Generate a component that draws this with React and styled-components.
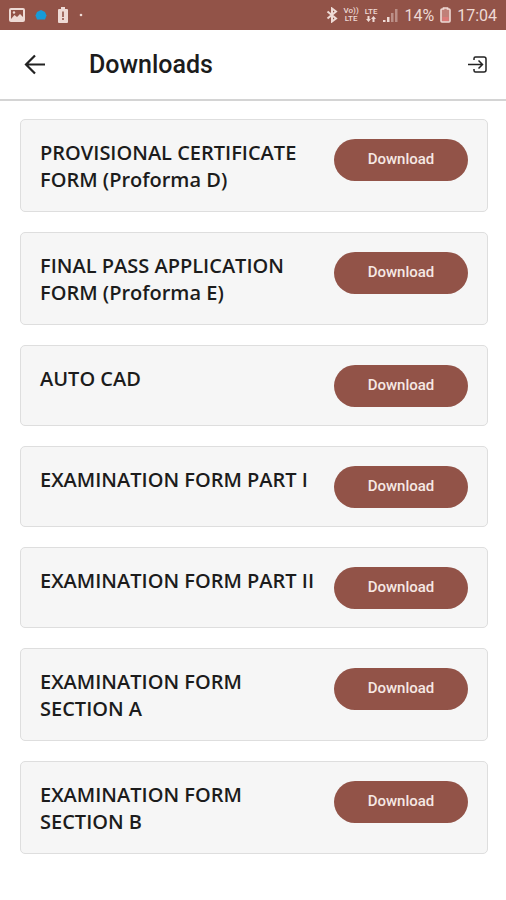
import React from 'react';

import styled, { createGlobalStyle } from 'styled-components';

const GlobalStyle = createGlobalStyle`
  * {
    box-sizing: border-box;
  }
  body {
    margin: 0;
    background: #fff;
    color: #1c1c1c;
    font-family: 'Open Sans', sans-serif;
  }
`;

const StatusBar = styled.div`
  display: flex;
  align-items: center;
  justify-content: space-between;
  height: 30px;
  padding: 0 9px;
  background: #925348;
  color: #eedad5;
`;

const StatusGroup = styled.div`
  display: flex;
  align-items: center;
  gap: ${({ $gap }) => $gap}px;
`;

const Network = styled.span`
  display: flex;
  flex-direction: column;
  align-items: center;
  font: 500 8px/8px Roboto, sans-serif;
`;

const StatusText = styled.span`
  padding-top: 2px;
  font: 400 16px/20px Roboto, sans-serif;
`;

const Header = styled.header`
  display: flex;
  align-items: center;
  height: 71px;
  padding: 0 16px 0 20px;
  border-bottom: 2px solid #d4d4d4;
`;

const IconButton = styled.button`
  display: flex;
  padding: 2px;
  border: 0;
  background: none;
  color: #222;
  cursor: pointer;
`;

const Title = styled.h1`
  flex: 1;
  margin: 0 0 0 39px;
  font: 500 25px/32px Roboto, sans-serif;
`;

const List = styled.ul`
  display: flex;
  flex-direction: column;
  gap: 20px;
  margin: 0;
  padding: 18px 18px 20px 20px;
  list-style: none;
`;

const Card = styled.li`
  display: flex;
  align-items: flex-start;
  justify-content: space-between;
  gap: 16px;
  padding: 19px 19px 18px;
  border: 1px solid #dedede;
  border-radius: 5px;
  background: #f6f6f6;
`;

const Name = styled.h2`
  margin: 0;
  font-size: 20px;
  font-weight: 600;
  line-height: 27px;
`;

const DownloadButton = styled.button`
  flex: none;
  width: 134px;
  height: 42px;
  padding: 0 0 2px;
  border: 0;
  border-radius: 21px;
  background: #925348;
  color: #f6e8e4;
  font: 500 15px/20px Roboto, sans-serif;
  cursor: pointer;
`;

const forms = [
  'PROVISIONAL CERTIFICATE FORM (Proforma D)',
  'FINAL PASS APPLICATION FORM (Proforma E)',
  'AUTO CAD',
  'EXAMINATION FORM PART I',
  'EXAMINATION FORM PART II',
  'EXAMINATION FORM SECTION A',
  'EXAMINATION FORM SECTION B',
];

const PictureIcon = () => (
  <svg width="16" height="16" viewBox="0 0 16 16" fill="currentColor">
    <rect x="1" y="2" width="14" height="12" rx="1" fill="none" stroke="currentColor" strokeWidth="2" />
    <path d="M2 12l3.500-4L8 10l3-3 3 3v3H2z" />
    <circle cx="5" cy="5.5" r="1.2" />
  </svg>
);

const DotIcon = () => (
  <svg width="12" height="16" viewBox="0 0 12 16">
    <path d="M6 3l4 2 1.500 3.500-1.500 4H2l-1.500-4L2 5z" fill="#179bd8" />
  </svg>
);

const BatteryAlertIcon = () => (
  <svg width="12" height="17" viewBox="0 0 12 17">
    <path d="M4 0h4v2h2q1 0 1 1v12q0 1-1 1H2q-1 0-1-1V3q0-1 1-1h2z" fill="currentColor" />
    <path d="M6 4.5v5.500M6 11v2" stroke="#925348" strokeWidth="1.6" />
  </svg>
);

const MoreDot = () => (
  <svg width="4" height="4" viewBox="0 0 4 4">
    <circle cx="2" cy="2" r="1.3" fill="currentColor" />
  </svg>
);

const BluetoothIcon = () => (
  <svg width="12" height="16" viewBox="0 0 12 16" fill="none" stroke="currentColor" strokeWidth="2">
    <path d="M1.5 4.5l8.5 7L6 14.500v-13l4 3-8.5 7" />
  </svg>
);

const DataArrows = () => (
  <svg width="10" height="7" viewBox="0 0 10 7" fill="currentColor">
    <path d="M0 3h1.5V0h2v3H5L2.5 6zM5 3l2.5-3L10 3H8.5v3h-2V3z" />
  </svg>
);

const SignalIcon = () => (
  <svg width="15" height="15" viewBox="0 0 15 15" fill="currentColor">
    <path d="M0 12h2.5v2H0zM4 9h2.5v5H4z" />
    <path d="M8 5h2.5v9H8zM12 1h2.5v13H12z" opacity="0.45" />
  </svg>
);

const BatteryIcon = () => (
  <svg width="11" height="16" viewBox="0 0 11 16">
    <path d="M3.5 1h4v1H9q1 0 1 1v11q0 1-1 1H2q-1 0-1-1V3q0-1 1-1h1.5z" fill="#c08078" stroke="#eedad5" strokeWidth="1.600" />
    <path d="M2.5 10h6v4h-6z" fill="#dc7a78" />
  </svg>
);

const BackIcon = () => (
  <svg width="26" height="26" viewBox="0 0 26 26" fill="none" stroke="currentColor" strokeWidth="2.2">
    <path d="M23 12.500H4.500M13 3.500l-9 9 9 9" />
  </svg>
);

const ExitIcon = () => (
  <svg width="20" height="20" viewBox="0 0 20 20" fill="none" stroke="currentColor" strokeWidth="1.5">
    <path d="M6 5V3.500Q6 2 7.500 2H16q2 0 2 2v11q0 2-2 2H7.500Q6 17 6 15.500V14M0 9.500h14M10.5 5.500l4 4-4 4" />
  </svg>
);

const FormCard = ({ name }) => (
  <Card>
    <Name>{ name }</Name>
    <DownloadButton type="button" aria-label={ `Download ${ name }` }>Download</DownloadButton>
  </Card>
);

const App = () => (
  <>
    <GlobalStyle />
    <StatusBar>
      <StatusGroup $gap={ 10 }>
        <PictureIcon />
        <DotIcon />
        <BatteryAlertIcon />
        <MoreDot />
      </StatusGroup>
      <StatusGroup $gap={ 6 }>
        <BluetoothIcon />
        <Network>
          <span>Vo))</span>
          <span>LTE</span>
        </Network>
        <Network>
          <span>LTE</span>
          <DataArrows />
        </Network>
        <SignalIcon />
        <StatusText>14%</StatusText>
        <BatteryIcon />
        <StatusText>17:04</StatusText>
      </StatusGroup>
    </StatusBar>
    <Header>
      <IconButton type="button" aria-label="Back">
        <BackIcon />
      </IconButton>
      <Title>Downloads</Title>
      <IconButton type="button" aria-label="Log out">
        <ExitIcon />
      </IconButton>
    </Header>
    <List>
      { forms.map((name) => <FormCard key={ name } name={ name } />) }
    </List>
  </>
);

export default App;
